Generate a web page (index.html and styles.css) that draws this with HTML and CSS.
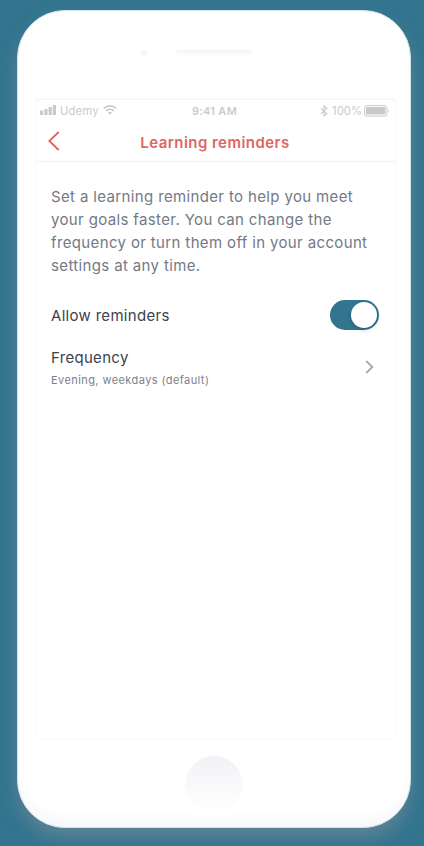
FILE: index.html
```
<!DOCTYPE html>
<html lang="en">
<head>
<meta charset="utf-8">
<title>Learning reminders</title>
<link rel="stylesheet" href="styles.css">
</head>
<body>
<main class="phone">
  <div class="earpiece"><span class="camera"></span><span class="speaker"></span></div>
  <section class="screen">
    <div class="status">
      <div class="status-left">
        <svg class="signal" width="16" height="11" viewBox="0 0 16 11" fill="#c9c9ca"><rect x="0" y="5.5" width="3.2" height="4.500" rx=".6"/><rect x="4.3" y="4" width="3.2" height="6" rx=".6"/><rect x="8.6" y="2" width="3.2" height="8" rx=".6"/><rect x="12.800" y="0" width="3.200" height="10" rx=".6"/></svg>
        <span class="carrier">Udemy</span>
        <svg class="wifi" width="14" height="10" viewBox="0 0 14 10" fill="none" stroke="#c9c9ca" stroke-width="1.7"><path d="M.8 3.5C4.3.1 9.700.1 13.200 3.500M3.100 6C5.300 3.900 8.700 3.900 10.900 6"/><path d="M5 7.600Q7 6 9 7.600L7 9.700Z" fill="#c9c9ca" stroke="none"/></svg>
      </div>
      <span class="time">9:41 AM</span>
      <div class="status-right">
        <svg class="bluetooth" width="8" height="12" viewBox="0 0 8 12" fill="none" stroke="#c9c9ca" stroke-width="1.1"><path d="M.8 3.300L6.800 8.400L4 11V1L6.800 3.600L.8 8.700"/></svg>
        <span class="percent">100%</span>
        <svg class="battery" width="26" height="12" viewBox="0 0 26 12"><rect x=".6" y=".6" width="22.300" height="10.500" rx="2" fill="none" stroke="#c9c9ca"/><rect x="2" y="2.100" width="19.500" height="7.500" rx=".8" fill="#c9c9ca"/><path d="M24 4.200Q25.600 5.800 24 7.600Z" fill="#c9c9ca"/></svg>
      </div>
    </div>
    <header class="navbar">
      <svg class="back" width="12" height="20" viewBox="0 0 12 20" fill="none" stroke="#e35e5c" stroke-width="1.800"><path d="M10.700 1L1.300 10L10.700 19"/></svg>
      <h1 class="title">Learning reminders</h1>
    </header>
    <div class="content">
      <p class="intro">Set a learning reminder to help you meet<br>your goals faster. You can change the<br>frequency or turn them off in your account<br>settings at any time.</p>
      <div class="row allow"><span class="label">Allow reminders</span><span class="toggle"><span class="knob"></span></span></div>
      <div class="row frequency">
        <div><div class="label">Frequency</div><div class="detail">Evening, weekdays (default)</div></div>
        <svg class="chevron" width="9" height="14" viewBox="0 0 9 14" fill="none" stroke="#a7aab4" stroke-width="1.800"><path d="M1.200 1L7.400 7L1.200 13"/></svg>
      </div>
    </div>
  </section>
  <div class="home"></div>
</main>
</body>
</html>
```
FILE: styles.css
```
* { box-sizing: border-box; }
body {
  margin: 0;
  height: 846px;
  overflow: hidden;
  background: #33758f;
  font-family: Inter, "Liberation Sans", sans-serif;
  padding: 10px 13px 0 17px;
}
.phone {
  width: 394px;
  height: 818px;
  padding: 39px 15px 0 18px;
  border: 1px solid #d5e2e8;
  border-radius: 48px;
  background: #fff;
  box-shadow: inset 0 -14px 14px -7px #f5f7f9, inset 0 0 18px #fcfcfd, 0 10px 18px -2px rgba(145, 150, 160, .5);
}
.earpiece { display: flex; height: 48px; padding-left: 104px; }
.camera { width: 7px; height: 6px; border-radius: 50%; background: #f7f7f7; }
.speaker { width: 76px; height: 5px; margin-left: 29px; border-radius: 2px; background: linear-gradient(#f4f4f5, #fcfcfc); }
.screen {
  width: 361px;
  height: 642px;
  margin-left: -1px;
  border: 1px solid #f8f8f9;
  border-top: 2px solid #f8f8f8;
  border-radius: 4px;
  background: #fff;
}
.status {
  display: grid;
  grid-template-columns: 1fr auto 1fr;
  align-items: center;
  height: 21px;
  padding: 0 5px 0 4px;
  color: #cbcbcc;
  font-size: 11.5px;
  line-height: 14px;
}
.status-left, .status-right { display: flex; align-items: center; }
.status-right { justify-content: flex-end; }
.carrier { margin: 0 4px 0 4px; font-size: 11.3px; letter-spacing: .15px; }
.wifi { margin-bottom: 1px; }
.time { margin-right: 1px; font-size: 11px; font-weight: 600; letter-spacing: .3px; }
.percent { margin: 0 2px 0 4px; font-size: 11.3px; }
.navbar {
  display: grid;
  grid-template-columns: 12px 1fr 12px;
  align-items: center;
  height: 41px;
  padding: 0 12px;
  border-bottom: 1px solid #f2f2f3;
}
.title { margin: 4px 1px 0 0; text-align: center; color: #e06663; font-size: 15px; line-height: 20px; font-weight: 600; letter-spacing: .45px; }
.content { padding: 23px 16.5px 0 15px; }
.intro { margin: 0; color: #747985; font-size: 15px; line-height: 23px; letter-spacing: .36px; white-space: nowrap; }
.row { display: flex; align-items: center; justify-content: space-between; }
.allow { height: 30px; margin-top: 23px; }
.label { color: #3d424d; font-size: 15px; line-height: 20px; letter-spacing: .3px; }
.allow .label { margin-top: 1px; }
.toggle { width: 49px; height: 30px; padding: 2px; border-radius: 15px; background: #33758f; display: flex; justify-content: flex-end; }
.knob { width: 26px; height: 26px; border-radius: 50%; background: #fff; box-shadow: 0 2px 4px rgba(0, 0, 0, .18); }
.frequency { margin-top: 18px; padding-right: 5px; }
.detail { margin-top: 4px; color: #7c818c; font-size: 11px; line-height: 16px; letter-spacing: .42px; }
.chevron { margin-bottom: 2px; }
.home { width: 58px; height: 58px; margin: 16px 0 0 149px; border-radius: 50%; background: linear-gradient(#f1f2f5, #fff 95%); }
```
